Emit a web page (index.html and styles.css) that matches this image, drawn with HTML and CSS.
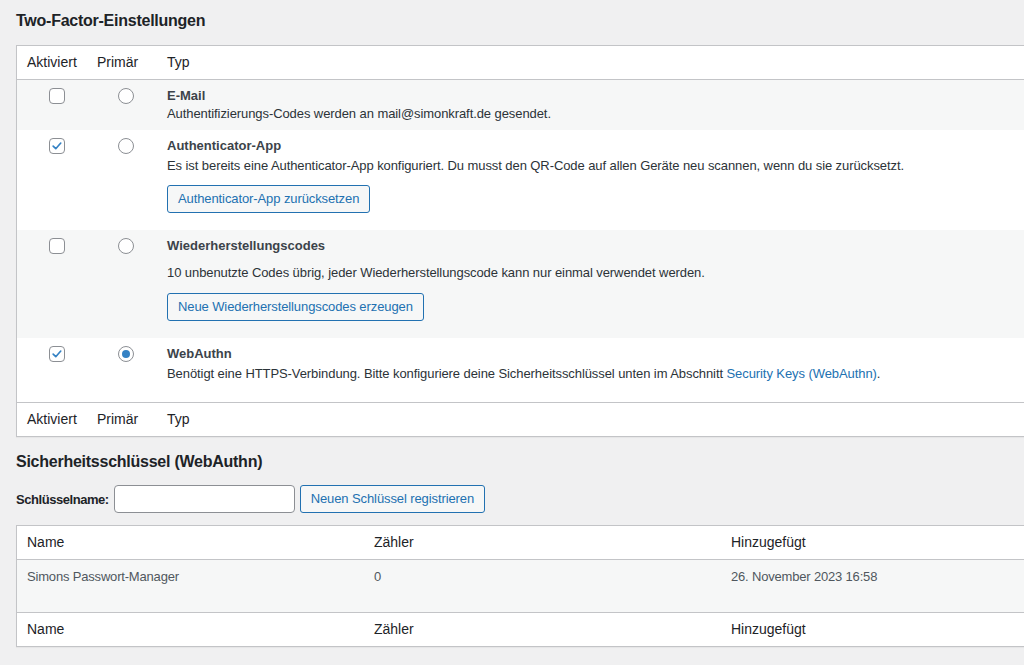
FILE: index.html
```html
<!DOCTYPE html>
<html lang="de">
<head>
<meta charset="utf-8">
<title>Two-Factor-Einstellungen</title>
<link rel="stylesheet" href="styles.css">
</head>
<body>
<div class="wrap">
  <h2 class="title first">Two-Factor-Einstellungen</h2>
  <table class="widefat tf-table">
    <thead>
      <tr>
        <th class="col-enabled">Aktiviert</th>
        <th class="col-primary">Primär</th>
        <th class="col-type">Typ</th>
      </tr>
    </thead>
    <tbody>
      <tr class="alt row-email">
        <td class="cell-check"><span class="cb"></span></td>
        <td class="cell-radio"><span class="rb"></span></td>
        <td class="cell-type">
          <div class="prov-title">E-Mail</div>
          <div class="prov-desc">Authentifizierungs-Codes werden an mail@simonkraft.de gesendet.</div>
        </td>
      </tr>
      <tr class="row-totp">
        <td class="cell-check"><span class="cb checked"><svg viewBox="0 0 16 16" width="14" height="14"><path d="M3.6 8.2 L6.6 11.1 L12.3 4.6" fill="none" stroke="#3582c4" stroke-width="1.9" stroke-linecap="round" stroke-linejoin="round"/></svg></span></td>
        <td class="cell-radio"><span class="rb"></span></td>
        <td class="cell-type">
          <div class="prov-title">Authenticator-App</div>
          <p class="prov-desc spaced">Es ist bereits eine Authenticator-App konfiguriert. Du musst den QR-Code auf allen Geräte neu scannen, wenn du sie zurücksetzt.</p>
          <div class="btn-line totp-btn"><button class="button" type="button">Authenticator-App zurücksetzen</button></div>
        </td>
      </tr>
      <tr class="alt row-backup">
        <td class="cell-check"><span class="cb"></span></td>
        <td class="cell-radio"><span class="rb"></span></td>
        <td class="cell-type">
          <div class="prov-title">Wiederherstellungscodes</div>
          <p class="prov-desc backup-desc">10 unbenutzte Codes übrig, jeder Wiederherstellungscode kann nur einmal verwendet werden.</p>
          <div class="btn-line backup-btn"><button class="button" type="button">Neue Wiederherstellungscodes erzeugen</button></div>
        </td>
      </tr>
      <tr class="row-webauthn">
        <td class="cell-check"><span class="cb checked"><svg viewBox="0 0 16 16" width="14" height="14"><path d="M3.6 8.2 L6.6 11.1 L12.3 4.6" fill="none" stroke="#3582c4" stroke-width="1.9" stroke-linecap="round" stroke-linejoin="round"/></svg></span></td>
        <td class="cell-radio"><span class="rb on"><span class="dot"></span></span></td>
        <td class="cell-type">
          <div class="prov-title">WebAuthn</div>
          <p class="prov-desc spaced">Benötigt eine HTTPS-Verbindung. Bitte konfiguriere deine Sicherheitsschlüssel unten im Abschnitt <a href="#keys">Security Keys (WebAuthn)</a>.</p>
        </td>
      </tr>
    </tbody>
    <tfoot>
      <tr>
        <th class="col-enabled">Aktiviert</th>
        <th class="col-primary">Primär</th>
        <th class="col-type">Typ</th>
      </tr>
    </tfoot>
  </table>

  <h2 class="title second" id="keys">Sicherheitsschlüssel (WebAuthn)</h2>
  <div class="key-form">
    <label class="key-label" for="keyname">Schlüsselname:</label>
    <input class="key-input" id="keyname" type="text">
    <button class="button" type="button">Neuen Schlüssel registrieren</button>
  </div>

  <table class="widefat keys-table">
    <thead>
      <tr>
        <th class="col-name">Name</th>
        <th class="col-counter">Zähler</th>
        <th class="col-added">Hinzugefügt</th>
      </tr>
    </thead>
    <tbody>
      <tr class="alt key-row">
        <td>Simons Passwort-Manager</td>
        <td>0</td>
        <td>26. November 2023 16:58</td>
      </tr>
    </tbody>
    <tfoot>
      <tr>
        <th class="col-name">Name</th>
        <th class="col-counter">Zähler</th>
        <th class="col-added">Hinzugefügt</th>
      </tr>
    </tfoot>
  </table>
</div>
</body>
</html>
```

FILE: styles.css
```css
html, body {
  margin: 0;
  padding: 0;
}
body {
  background: #f0f0f1;
  color: #3c434a;
  font-family: "Liberation Sans", Arial, sans-serif;
  font-size: 13px;
  overflow: hidden;
  width: 1024px;
  height: 665px;
}
.wrap {
  padding-left: 16px;
  width: 1100px;
}
.title {
  font-size: 16px;
  font-weight: 700;
  color: #1d2327;
  margin: 0;
  line-height: 20px;
  letter-spacing: -0.25px;
}
.title.first {
  padding-top: 11px;
  margin-bottom: 14px;
}
.title.second {
  margin-top: 15px;
  margin-bottom: 13px;
}
.widefat {
  border: 1px solid #c3c4c7;
  border-spacing: 0;
  border-collapse: separate;
  background: #fff;
  width: 1071px;
  box-shadow: 0 1px 1px rgba(0,0,0,0.04);
}
.widefat th {
  text-align: left;
  font-weight: 400;
  font-size: 14px;
  color: #1d2327;
  line-height: 19px;
  padding: 7px 10px;
}
.widefat thead th {
  border-bottom: 1px solid #c3c4c7;
}
.widefat tfoot th {
  border-top: 1px solid #c3c4c7;
}
.widefat td {
  vertical-align: top;
  padding: 7px 10px;
  line-height: 18px;
  color: #2c3338;
  letter-spacing: -0.08px;
}
.widefat tr.alt td {
  background: #f6f7f7;
}
.tf-table .col-enabled { width: 50px; }
.tf-table .col-primary { width: 50px; }
.cell-check, .cell-radio {
  padding-top: 8px !important;
}
.cell-check .cb { margin-left: 22px; }
.cell-radio .rb { margin-left: 21px; }
.cb {
  display: block;
  box-sizing: border-box;
  width: 16px;
  height: 16px;
  border: 1px solid #8c8f94;
  border-radius: 4px;
  background: #fff;
  position: relative;
}
.cb svg {
  position: absolute;
  left: 0;
  top: 0;
}
.rb {
  display: block;
  box-sizing: border-box;
  width: 16px;
  height: 16px;
  border: 1px solid #8c8f94;
  border-radius: 50%;
  background: #fff;
  position: relative;
}
.rb .dot {
  position: absolute;
  left: 3px;
  top: 3px;
  width: 8px;
  height: 8px;
  border-radius: 50%;
  background: #3582c4;
}
.prov-title {
  font-weight: 700;
  color: #3c434a;
  letter-spacing: 0;
}
.prov-desc {
  margin: 0;
}
.prov-desc.spaced {
  margin-top: 2px;
}
.totp-btn { margin-top: 10px; margin-bottom: 10px; }
.backup-desc { margin-top: 9px; }
.backup-btn { margin-top: 11px; margin-bottom: 10px; }
.row-webauthn .cell-type { padding-bottom: 19px; }
.button {
  font-family: inherit;
  font-size: 13px;
  letter-spacing: -0.1px;
  color: #2271b1;
  background: #f6f7f7;
  border: 1px solid #2271b1;
  border-radius: 3px;
  height: 28px;
  line-height: 26px;
  padding: 0 10px;
  margin: 0;
  cursor: pointer;
  display: inline-block;
  vertical-align: top;
}
a {
  color: #2271b1;
  text-decoration: none;
}
.key-form {
  display: flex;
  align-items: center;
  gap: 5px;
  margin-bottom: 12px;
}
.key-label {
  font-weight: 700;
  color: #1d2327;
  letter-spacing: -0.45px;
}
.key-input {
  box-sizing: border-box;
  width: 181px;
  height: 28px;
  border: 1px solid #8c8f94;
  border-radius: 4px;
  background: #fff;
  margin: 0;
  padding: 0 8px;
  font-family: inherit;
}
.keys-table .col-name { width: 327px; }
.keys-table .col-counter { width: 337px; }
.keys-table td {
  color: #50575e;
  padding-top: 8px;
  padding-bottom: 26px;
  letter-spacing: -0.18px;
}
```
